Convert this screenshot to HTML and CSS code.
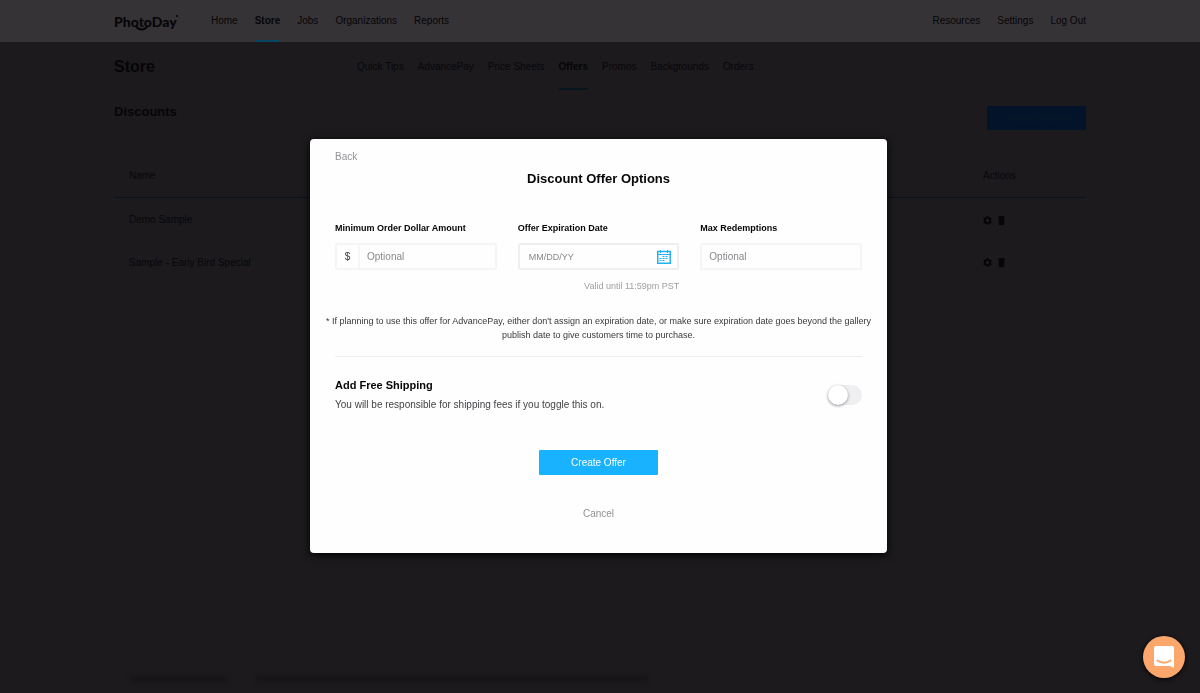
FILE: index.html
```html
<!DOCTYPE html>
<html lang="en">
<head>
<meta charset="utf-8">
<title>PhotoDay Store</title>
<link rel="stylesheet" href="styles.css">
</head>
<body>
<header class="topbar">
  <div class="container topbar-inner">
    <a class="logo" href="#">PhotoDay<svg class="logo-smile" viewBox="0 0 14 6" aria-hidden="true"><path d="M1 1C3 5.500 10 5.500 12.500 1"/></svg><svg class="logo-mark" viewBox="0 0 2 2" aria-hidden="true"><circle cx="1" cy="1" r="1"/></svg></a>
    <nav class="nav main-nav">
      <a href="#">Home</a>
      <a href="#" class="active">Store</a>
      <a href="#">Jobs</a>
      <a href="#">Organizations</a>
      <a href="#">Reports</a>
    </nav>
    <nav class="nav user-nav">
      <a href="#">Resources</a>
      <a href="#">Settings</a>
      <a href="#">Log Out</a>
    </nav>
  </div>
</header>
<main class="container page">
  <div class="page-head">
    <h1>Store</h1>
    <nav class="sub-nav">
      <a href="#">Quick Tips</a>
      <a href="#">AdvancePay</a>
      <a href="#">Price Sheets</a>
      <a href="#" class="active">Offers</a>
      <a href="#">Promos</a>
      <a href="#">Backgrounds</a>
      <a href="#">Orders</a>
    </nav>
  </div>
  <div class="section-head">
    <h2>Discounts</h2>
    <button class="new-button" type="button">Create Discount</button>
  </div>
  <table class="offers">
    <thead><tr><th>Name</th><th class="actions">Actions</th></tr></thead>
    <tbody>
      <tr><td>Demo Sample</td><td class="actions">
        <button type="button" aria-label="Edit"><svg class="gear" viewBox="0 0 10 10"><circle cx="5" cy="5" r="3"/><path d="M5 0v2M5 8v2M.7 2.500l1.700 1M7.600 6.500l1.700 1M.7 7.500l1.700-1M7.600 3.500l1.700-1"/></svg></button><button type="button" aria-label="Delete"><svg class="trash" viewBox="0 0 10 10"><path d="M2 0h6v1h1v1H1V1h1zM2 2h6v8H2z"/></svg></button></td></tr>
      <tr><td>Sample - Early Bird Special</td><td class="actions">
        <button type="button" aria-label="Edit"><svg class="gear" viewBox="0 0 10 10"><circle cx="5" cy="5" r="3"/><path d="M5 0v2M5 8v2M.7 2.500l1.700 1M7.600 6.500l1.700 1M.7 7.500l1.700-1M7.600 3.500l1.700-1"/></svg></button><button type="button" aria-label="Delete"><svg class="trash" viewBox="0 0 10 10"><path d="M2 0h6v1h1v1H1V1h1zM2 2h6v8H2z"/></svg></button></td></tr>
    </tbody>
  </table>
  <div class="page-foot"><span class="bar bar-short"></span><span class="bar bar-long"></span></div>
</main>

<div class="overlay">
  <form class="modal" role="dialog" aria-labelledby="title">
    <button class="text-button back" type="button">Back</button>
    <h2 id="title" class="title">Discount Offer Options</h2>
    <div class="fields">
      <div class="field">
        <label for="minimum">Minimum Order Dollar Amount</label>
        <div class="control"><span class="prefix">$</span><input id="minimum" type="text" placeholder="Optional"></div>
      </div>
      <div class="field">
        <label for="expires">Offer Expiration Date</label>
        <div class="control date"><input id="expires" type="text" placeholder="MM/DD/YY">
          <svg class="calendar" viewBox="0 0 14 14" aria-hidden="true"><path d="M.75 1.500h12.500v11.750H.75z"/><path class="bar-line" d="M1 4.500h12M3.500 0v3M10.500 0v3"/><path class="dots" d="M5.500 6.500h6M2.500 8.500h9M2.500 10.500h6"/></svg>
        </div>
        <p class="hint">Valid until 11:59pm PST</p>
      </div>
      <div class="field">
        <label for="max">Max Redemptions</label>
        <div class="control"><input id="max" type="text" placeholder="Optional"></div>
      </div>
    </div>
    <p class="note">* If planning to use this offer for AdvancePay, either don't assign an expiration date, or make sure expiration date goes beyond the gallery publish date to give customers time to purchase.</p>
    <div class="shipping">
      <div>
        <label class="shipping-title" for="free">Add Free Shipping</label>
        <p class="shipping-text">You will be responsible for shipping fees if you toggle this on.</p>
      </div>
      <input id="free" class="toggle" type="checkbox" role="switch">
    </div>
    <button class="submit" type="submit">Create Offer</button>
    <button class="text-button cancel" type="button">Cancel</button>
  </form>
</div>
<button class="chat" type="button" aria-label="Open chat"><svg viewBox="0 0 22 24"><path class="bubble" d="M3 1h16q2 0 2 2v20l-4-2H3q-2 0-2-2V3q0-2 2-2z"/><path class="smile" d="M4.500 15.500C8 18.500 14 18.500 17.500 15.500"/></svg></button>
</body>
</html>
```

FILE: styles.css
```css
* { box-sizing: border-box; }
body {
  margin: 0;
  min-height: 100vh;
  display: flex;
  flex-direction: column;
  background: #1c1a1d;
  color: #060507;
  font: 10px/14px "Liberation Sans", Arial, sans-serif;
}
h1, h2, p { margin: 0; }
a { color: inherit; text-decoration: none; }
button { font: inherit; color: inherit; border: 0; background: none; padding: 0; cursor: pointer; }
.container { width: 100%; max-width: 972px; margin: 0 auto; }

.topbar { background: #353336; }
.topbar-inner { display: flex; height: 42px; }
.logo { position: relative; width: 64px; margin-right: 33px; padding-top: 12px; font: 900 14px/20px Lato, sans-serif; }
.logo svg { position: absolute; fill: none; stroke: #060507; }
.logo-smile { left: 21px; top: 25px; width: 14px; height: 6px; stroke-width: 2; }
.logo-mark { right: 0; top: 15px; width: 2px; height: 2px; }
.logo .logo-mark { fill: #060507; stroke: none; }
.nav { display: flex; gap: 17px; line-height: 42px; }
.user-nav { margin-left: auto; }
.nav .active { font-weight: bold; box-shadow: inset 0 -2px #064563; }

.page { flex: 1; display: flex; flex-direction: column; }
.page-head { display: flex; height: 48px; line-height: 50px; }
h1 { font-size: 16px; width: 243px; line-height: 50px; }
.sub-nav { display: flex; gap: 14px; color: #08070a; }
.sub-nav .active { height: 48px; font-weight: bold; color: #060507; box-shadow: inset 0 -2px #07151f; }
.section-head { display: flex; justify-content: space-between; padding-top: 12px; }
h2 { font-size: 13px; line-height: 18px; }
.section-head h2 { line-height: 20px; }
.new-button { width: 99px; height: 24px; margin-top: 4px; background: #03132a; color: #0b1826; font-size: 9px; border-radius: 1px; }
.offers { width: 100%; margin-top: 24px; border-collapse: collapse; color: #08070a; }
.offers th, .offers td { height: 43px; padding: 2px 0 0 15px; text-align: left; font-weight: normal; }
.offers thead th { border-bottom: 1px solid #08131e; }
.offers .actions { width: 118px; }
.offers button { margin-right: 5px; vertical-align: middle; }
.offers svg { display: block; width: 9px; height: 9px; }
.gear { fill: none; stroke: #060507; stroke-width: 2; }
.trash { fill: #060507; }
.page-foot { display: flex; gap: 27px; margin-top: auto; padding: 0 0 11px 15px; }
.bar { height: 6px; background: #171518; filter: blur(2px); }
.bar-short { width: 99px; }
.bar-long { width: 394px; }

.overlay { position: fixed; inset: 0; display: flex; align-items: center; justify-content: center; padding: 0 3px 1px 0; }
.modal {
  display: flex;
  flex-direction: column;
  width: 577px;
  max-width: 100%;
  padding: 11px 25px 32px;
  background: #fefefe;
  border-radius: 4px;
  box-shadow: 0 2px 8px #000;
  color: #060507;
}
.text-button { color: #929094; line-height: 14px; }
.back { align-self: flex-start; }
.title { margin-top: 6px; text-align: center; }
.fields { display: grid; grid-template-columns: repeat(3, minmax(0, 1fr)); gap: 21px; margin-top: 34px; }
.field label { display: block; font-size: 9px; font-weight: bold; line-height: 12px; white-space: nowrap; }
.control { display: flex; align-items: center; height: 27px; margin-top: 9px; border: 2px solid #f5f4f7; border-radius: 2px; }
.control input { flex: 1; min-width: 0; height: 100%; padding: 0 7px; border: 0; outline: 0; background: none; font: inherit; color: #444246; }
.control input::placeholder { color: #89878b; opacity: 1; }
.control.date { border-color: #efeef1; }
.control.date input { padding-left: 9px; font-size: 9px; }
.prefix { width: 23px; text-align: center; line-height: 23px; border-right: 2px solid #f6f5f8; color: #39373b; }
.calendar { width: 14px; height: 14px; margin-right: 6px; fill: none; stroke: #27b1f5; stroke-width: 1.5; }
.calendar .bar-line { stroke-width: 1; }
.calendar .dots { stroke-width: 1; stroke-dasharray: 2 1; }
.hint { margin-top: 10px; font-size: 9px; line-height: 12px; color: #a09ea2; text-align: right; }
.note { margin: 22px -12px 0; font-size: 9px; line-height: 14px; text-align: center; color: #39373b; }
.shipping { display: flex; align-items: center; justify-content: space-between; margin-top: 14px; padding-top: 20px; border-top: 1px solid #eeedf0; }
.shipping-title { display: block; font-size: 11px; font-weight: bold; line-height: 16px; }
.shipping-text { margin-top: 5px; color: #444246; }
.toggle { position: relative; appearance: none; width: 34px; height: 20px; margin: 0; border-radius: 10px; background: #efeef1; cursor: pointer; }
.toggle::before { content: ""; position: absolute; left: 0; top: 0; width: 20px; height: 20px; border-radius: 50%; background: #fff; box-shadow: 0 1px 3px #8c8a90; }
.toggle:checked { background: #18b2ff; }
.toggle:checked::before { left: 14px; }
.submit { align-self: center; width: 119px; height: 25px; margin-top: 38px; background: #18b2ff; color: #fff; border-radius: 1px; }
.cancel { align-self: center; margin-top: 32px; }
.chat { position: fixed; right: 15px; bottom: 15px; width: 42px; height: 42px; border-radius: 50%; background: #fba76b; display: flex; align-items: center; justify-content: center; box-shadow: 0 1px 5px #000; }
.chat svg { width: 22px; height: 24px; }
.bubble { fill: #fff; }
.smile { fill: none; stroke: #fba76b; stroke-width: 2; stroke-linecap: round; }
```
